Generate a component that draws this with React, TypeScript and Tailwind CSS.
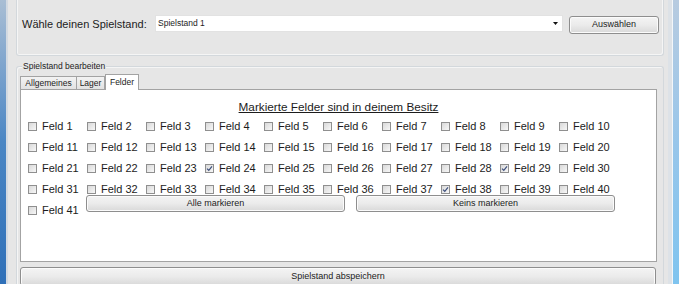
import React from "react";

const checked = new Set([24, 29, 38]);

function CheckBox({ on }: { on: boolean }) {
    return (
        <span className="w-[9px] h-[9px] shrink-0 border border-[#8f8f8f] bg-gradient-to-br from-[#d9d9d9] to-[#f7f7f7] flex items-center justify-center">
            {on && (
                <svg width="7" height="7" viewBox="0 0 7 7">
                    <path d="M1 3.6 L2.8 5.4 L6 1.4" fill="none" stroke="#3d4f7c" strokeWidth="1.2" />
                </svg>
            )}
        </span>
    );
}

function Field({ n, width = "w-[59px]" }: { n: number; width?: string }) {
    return (
        <div className={`${width} h-[21px] shrink-0 flex items-center gap-[5px]`}>
            <CheckBox on={checked.has(n)} />
            <span className="text-[11px] leading-none text-[#1c1c1c]">Feld {n}</span>
        </div>
    );
}

function WinButton({ label, className }: { label: string; className: string }) {
    return (
        <div
            className={`${className} flex items-center justify-center rounded-[3px] border border-[#8e8e8e] bg-gradient-to-b from-[#f4f4f4] via-[#ebebeb] to-[#d9d9d9] shadow-[inset_0_0_0_1px_#fbfbfb] text-[9px] text-[#1c1c1c]`}
        >
            {label}
        </div>
    );
}

export default function App() {
    const rows = [0, 1, 2, 3].map((r) => Array.from({ length: 10 }, (_, i) => r * 10 + i + 1));

    return (
        <div className="w-[679px] h-[284px] flex overflow-hidden bg-[#e6e6e6] font-['Liberation_Sans',Arial,sans-serif] text-[#1c1c1c]">
            {/* window frame, left */}
            <div className="w-[6px] shrink-0 bg-gradient-to-b from-[#a9bed4] via-[#4a86c4] to-[#2f70b8]" />
            <div className="w-[2px] shrink-0 bg-[#d3dae2]" />

            <div className="flex-1 flex flex-col pl-[8px] pr-[4px]">
                {/* Spielstand waehlen */}
                <div className="h-[56px] shrink-0 border-x border-b border-[#d3d8dc] rounded-b-[3px] shadow-[inset_1px_0_0_#f5f5f5,inset_-1px_-1px_0_#f5f5f5] flex items-start pt-[15px] pl-[5px]">
                    <div className="w-[133px] h-[17px] flex items-center text-[11px] pt-[1px]">Wähle deinen Spielstand:</div>
                    <div className="w-[408px] h-[17px] bg-white border border-[#e2e2e2] flex items-center justify-between pl-[2px] pr-[4px]">
                        <span className="text-[8.5px]">Spielstand 1</span>
                        <svg width="5" height="3" viewBox="0 0 5 3">
                            <polygon points="0,0 5,0 2.5,3" fill="#111" />
                        </svg>
                    </div>
                    <WinButton label="Auswählen" className="ml-[6px] mt-[1px] w-[90px] h-[18px]" />
                </div>

                {/* Spielstand bearbeiten */}
                <div className="relative mt-[10px] flex-1 border-x border-t border-[#d3d8dc] rounded-t-[3px] shadow-[inset_1px_1px_0_#f5f5f5] flex flex-col pl-[3px] pr-[6px] pt-[7px]">
                    <span className="absolute left-[5px] top-[-6px] bg-[#e6e6e6] px-[1px] text-[8.5px] leading-[10px]">Spielstand bearbeiten</span>

                    <div className="h-[15px] flex items-end text-[8.5px]">
                        <div className="w-[56px] h-[13px] border-l border-t border-[#a3a3a3] bg-gradient-to-b from-[#f3f3f3] to-[#e2e2e2] flex items-center justify-center">
                            Allgemeines
                        </div>
                        <div className="w-[29px] h-[13px] border-l border-t border-r border-[#a3a3a3] bg-gradient-to-b from-[#f3f3f3] to-[#e2e2e2] flex items-center justify-center">
                            Lager
                        </div>
                        <div className="relative z-10 -mb-[1px] w-[34px] h-[16px] border-x border-t border-[#a3a3a3] bg-white flex items-center justify-center pb-[1px]">
                            Felder
                        </div>
                    </div>

                    <div className="h-[173px] shrink-0 bg-white border border-[#a3a3a3] flex flex-col">
                        <div className="mt-[10px] h-[13px] text-center text-[11.75px] leading-[13px] underline">
                            Markierte Felder sind in deinem Besitz
                        </div>
                        <div className="mt-[3px] flex flex-col pl-[7px]">
                            {rows.map((row, r) => (
                                <div key={r} className={`flex ${r === 3 ? "h-[16px] items-start" : "h-[21px]"}`}>
                                    {row.map((n) => (
                                        <Field key={n} n={n} />
                                    ))}
                                </div>
                            ))}
                            <div className="flex items-start">
                                <div className="mt-[5px]">
                                    <Field n={41} width="w-[58px]" />
                                </div>
                                <WinButton label="Alle markieren" className="w-[259px] h-[17px]" />
                                <WinButton label="Keins markieren" className="ml-[11px] w-[259px] h-[17px]" />
                            </div>
                        </div>
                    </div>

                    <WinButton label="Spielstand abspeichern" className="mt-[5px] mr-[1px] h-[19px]" />
                </div>
            </div>

            {/* window frame, right */}
            <div className="w-[4px] shrink-0 bg-[#dde2e7]" />
            <div className="w-[1px] shrink-0 bg-[#f3f6f9]" />
            <div className="w-[6px] shrink-0 bg-gradient-to-b from-[#b7cbe0] via-[#98c6ea] to-[#7fc4ef]" />
        </div>
    );
}
